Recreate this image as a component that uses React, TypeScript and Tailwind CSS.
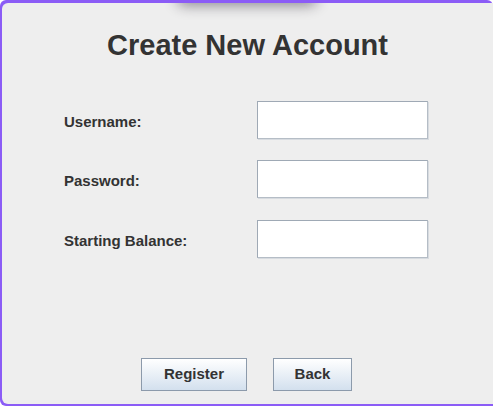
export default function App() {
  const fields = [
    { label: 'Username:', top: 'mt-[39px]' },
    { label: 'Password:', top: 'mt-[21px]' },
    { label: 'Starting Balance:', top: 'mt-[22px]' },
  ];

  return (
    <div
      className="relative w-[493px] h-[406px] overflow-hidden bg-white"
      style={{ fontFamily: '"Liberation Sans", Arial, sans-serif' }}
    >
      {/* window frame */}
      <div className="relative w-full h-full bg-[#8b5cf6] pt-[3px] pl-[2px] pb-[2px] rounded-l-[6px] rounded-tr-[6px]">
        <div className="relative w-full h-full bg-[#eeeeee] rounded-tl-[6px] rounded-bl-[6px] overflow-hidden">
          {/* top shadow */}
          <div className="absolute left-[175px] top-[-12px] w-[140px] h-[14px] rounded-full bg-[#1a1424] blur-[7px] opacity-50" />

          <h1 className="mt-[25px] text-center text-[29px] font-bold text-[#333333] leading-[34px]">
            Create New Account
          </h1>

          <div className="flex flex-col">
            {fields.map((f) => (
              <div key={f.label} className={`flex items-center ${f.top}`}>
                <span className="w-[255px] pl-[62px] pt-[4px] text-[15px] font-bold text-[#333333]">
                  {f.label}
                </span>
                <input
                  type="text"
                  className="w-[171px] h-[38px] bg-white border border-[#9fa9b5] border-r-[#b5bdc6] border-b-[#b5bdc6] shadow-[1px_1px_0_#d7dbe0] outline-none"
                />
              </div>
            ))}
          </div>

          <div className="flex justify-center gap-[26px] mt-[100px] pr-[2px]">
            <button className="w-[106px] h-[33px] border border-[#8c9aab] bg-gradient-to-b from-white to-[#d3e0ee] text-[15px] font-bold text-[#333333]">
              Register
            </button>
            <button className="w-[79px] h-[33px] border border-[#8c9aab] bg-gradient-to-b from-white to-[#d3e0ee] text-[15px] font-bold text-[#333333]">
              Back
            </button>
          </div>
        </div>
      </div>
    </div>
  );
}
